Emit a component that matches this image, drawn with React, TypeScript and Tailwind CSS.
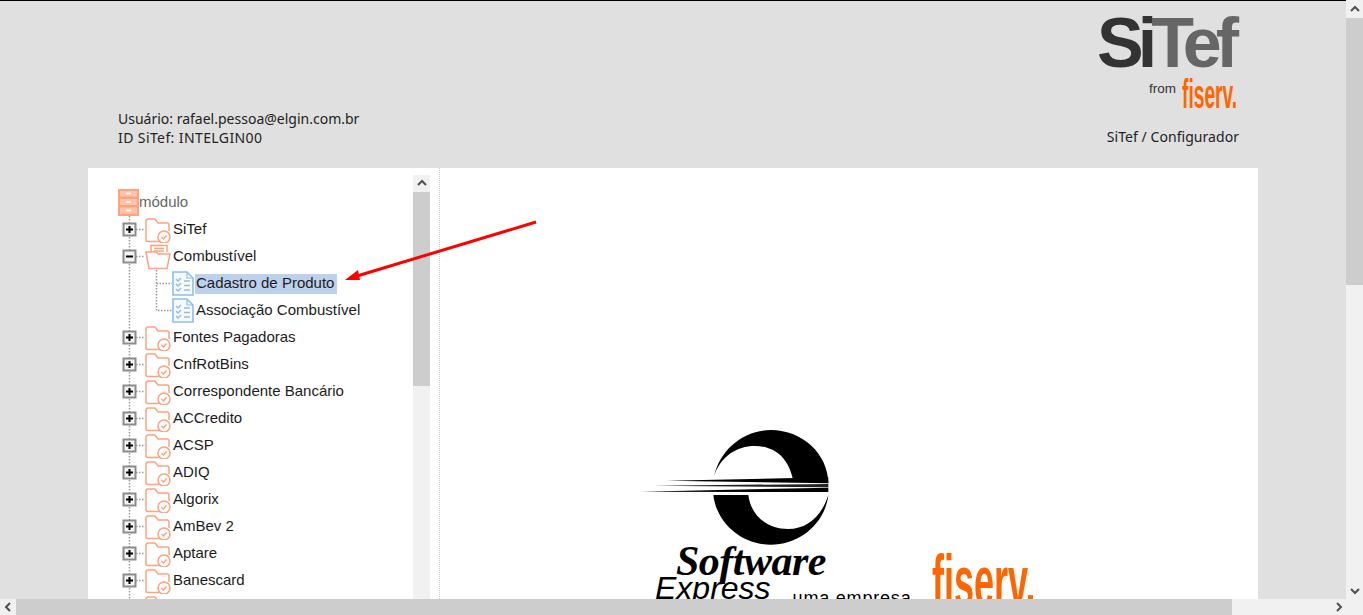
import React from 'react';

const folders = ['Fontes Pagadoras', 'CnfRotBins', 'Correspondente Bancário', 'ACCredito', 'ACSP', 'ADIQ', 'Algorix', 'AmBev 2', 'Aptare', 'Banescard', ''];

const Chevron = ({ dir }: { dir: 'up' | 'down' | 'left' | 'right' }) => {
  const d = {
    up: 'M2 7 L6 3 L10 7',
    down: 'M2 4 L6 8 L10 4',
    left: 'M8 2 L4 6 L8 10',
    right: 'M4 2 L8 6 L4 10',
  }[dir];
  return (
    <svg width="12" height="12" viewBox="0 0 12 12" fill="none">
      <path d={d} stroke="#505050" strokeWidth="2" />
    </svg>
  );
};

const Dots = ({ d }: { d: string }) => <path d={d} stroke="#999" strokeWidth="1.5" strokeDasharray="1.5 1.5" fill="none" />;

const Toggle = ({ open }: { open?: boolean }) => (
  <g>
    <Dots d="M11.5 0 V27 M18 13.5 H27" />
    <rect x="5.5" y="7.5" width="12" height="12" fill="#f4f4f4" stroke="#8c8c8c" strokeWidth="2" />
    <path d={open ? 'M8 13.5 H15' : 'M8 13.5 H15 M11.5 10 V17'} stroke="#000" strokeWidth="2" />
  </g>
);

const ClosedFolder = () => (
  <g fill="none" stroke="#ffa27e" strokeWidth="1.5">
    <path d="M28 24 V5.5 Q28 3 30 3 H37 L40 7 H49 Q51 7 51 9 V15 M44 25.5 H30 Q28 25.5 28 24" />
    <circle cx="46" cy="21" r="6" fill="#fff" />
    <path d="M43.5 21 L45.5 23 L48.5 19.5" />
  </g>
);

const OpenFolder = () => (
  <g fill="none" stroke="#ffa27e" strokeWidth="1.5">
    <path d="M33 9 V2.5 H49 V9 M36 5.5 H46 M36 8 H46" />
    <path d="M28 9 H38 L40 11 H52 L49 25.5 H31 Z" />
  </g>
);

const FileIcon = () => (
  <svg width="22" height="25" viewBox="0 0 22 25" fill="none" className="shrink-0">
    <path d="M1 1 H15 L21 7 V24 H1 Z" fill="#f4f9fd" stroke="#8fbfe6" strokeWidth="1.6" />
    <path d="M15 1 V7 H21" stroke="#8fbfe6" strokeWidth="1.2" />
    <path d="M4 8 L6 10 L9 7 M4 13 L6 15 L9 12 M4 18 L6 20 L9 17" stroke="#8fbbe0" strokeWidth="1.3" />
    <path d="M12 10 H18 M12 14.5 H18 M12 19 H18" stroke="#a9b8c6" strokeWidth="1.5" />
  </svg>
);

const FolderRow = ({ label, open }: { label: string; open?: boolean }) => (
  <div className="flex h-[27px] items-center">
    <svg width="55" height="27" viewBox="0 0 55 27" className="shrink-0">
      <Toggle open={open} />
      {open ? <OpenFolder /> : <ClosedFolder />}
    </svg>
    <span className="pb-[2px] text-[15px] leading-none text-[#1c1c1c]">{label}</span>
  </div>
);

const FileRow = ({ label, selected, last }: { label: string; selected?: boolean; last?: boolean }) => (
  <div className="flex h-[27px] items-center">
    <svg width="54" height="27" viewBox="0 0 54 27" className="shrink-0">
      <Dots d="M11.5 0 V27" />
      <Dots d={last ? 'M38.5 0 V13.5 H54' : 'M38.5 0 V27 M38.5 13.5 H54'} />
    </svg>
    <FileIcon />
    <span className={`ml-[1px] flex h-[20px] items-center pl-[1px] pr-[3px] text-[15px] text-[#1c1c1c] ${selected ? 'bg-[#bdd0ec]' : ''}`}>{label}</span>
  </div>
);

const ModuleIcon = () => (
  <svg width="21" height="27" viewBox="0 0 21 27" className="shrink-0">
    <rect width="21" height="27" fill="#ffa27e" />
    <path d="M2 2 H19 V7.5 H2 Z M2 10 H19 V16 H2 Z M2 18.5 H19 V25 H2 Z" fill="#ffc4ab" />
    <path d="M8 4.5 H13 M8 13 H13 M8 21.5 H13" stroke="#fff" strokeWidth="1.5" />
  </svg>
);

const EMark = () => (
  <svg width="440" height="128" viewBox="0 0 1320 384" className="block">
    <path d="M282 170 C300 85 375 30 452 30 C550 30 625 105 625 190 L518 175 C505 115 465 78 405 78 C350 78 300 110 282 170 Z" fill="#000" />
    <path d="M280 225 C290 310 365 374 452 374 C540 374 615 310 625 225 C605 290 560 327 505 327 C440 327 392 285 385 225 Z" fill="#000" />
    <path d="M140 182 L625 172 L625 190 Z" fill="#000" />
    <path d="M100 197 L625 192 L625 202 Z" fill="#222" />
    <path d="M60 215 L625 203 L625 216 Z" fill="#000" />
  </svg>
);

export default function App() {
  return (
    <div className="relative flex h-[615px] w-[1363px] flex-col overflow-hidden bg-[#e0e0e0] font-['Liberation_Sans',sans-serif]">
      <div className="flex min-h-0 flex-1">
        <div className="flex min-w-0 flex-1 flex-col overflow-hidden">
          <header className="flex h-[168px] shrink-0 justify-between border-t border-black pr-[107px] font-['Noto_Sans',sans-serif] text-[14px] text-[#222]">
            <div className="self-end pb-[21px] pl-[118px] leading-[19px]">
              <p>Usuário: rafael.pessoa@elgin.com.br</p>
              <p className="tracking-[.4px]">ID SiTef: INTELGIN00</p>
            </div>
            <div className="flex flex-col items-end">
              <div className="mt-[7px] font-['Liberation_Sans',sans-serif] text-[70px] font-bold leading-[70px] tracking-[-6px]">
                <span className="text-[#333]">Si</span>
                <span className="pr-[6px] text-[#666]">Tef</span>
              </div>
              <div className="flex h-[30px] items-start">
                <span className="mr-[6px] mt-[3px] font-['Liberation_Sans',sans-serif] text-[13.5px] leading-[16px] text-[#333]">from</span>
                <div className="w-[57px]">
                  <span className="inline-block origin-left scale-x-[.48] font-['Liberation_Sans',sans-serif] text-[40px] font-bold leading-[32px] text-[#ff6600]">fiserv.</span>
                </div>
              </div>
              <p className="mt-[19px] leading-[19px] tracking-[.05px]">SiTef / Configurador</p>
            </div>
          </header>
          <main className="mx-[88px] flex min-h-0 flex-1 bg-white">
            <section className="flex w-[342px] shrink-0 overflow-hidden pt-[7px]">
              <div className="min-w-0 flex-1 overflow-hidden pl-[30px] pt-[14px]">
                <div className="flex h-[27px] items-center">
                  <ModuleIcon />
                  <span className="text-[15px] text-[#666]">módulo</span>
                </div>
                <FolderRow label="SiTef" />
                <FolderRow label="Combustível" open />
                <FileRow label="Cadastro de Produto" selected />
                <FileRow label="Associação Combustível" last />
                {folders.map((name) => (
                  <FolderRow key={name} label={name} />
                ))}
              </div>
              <div className="flex w-[17px] shrink-0 flex-col bg-[#f1f1f1]">
                <div className="flex h-[17px] items-center justify-center"><Chevron dir="up" /></div>
                <div className="h-[194px] bg-[#cdcdcd]" />
              </div>
            </section>
            <section className="ml-[9px] min-w-0 flex-1 overflow-hidden border-l border-dotted border-[#ccc] pl-[180px] pt-[252px]">
              <EMark />
              <div className="ml-[56px] mt-[-1px] h-[28px] font-['Liberation_Serif',serif] text-[42px] font-bold italic leading-[28px] tracking-[-.5px] text-black">Software</div>
              <div className="flex h-[30px] items-start">
                <span className="ml-[35px] mt-[-2px] font-['Liberation_Sans',sans-serif] text-[32px] italic leading-[30px] text-black">Express</span>
                <span className="ml-[22px] mt-[13px] text-[18px] leading-[20px] tracking-[.8px] text-black">uma empresa</span>
                <div className="ml-[21px] mt-[-30px] w-[104px]">
                  <span className="inline-block origin-left scale-x-[.5] text-[72px] font-bold leading-[72px] text-[#ff6600]">fiserv.</span>
                </div>
              </div>
            </section>
          </main>
        </div>
        <div className="flex w-[17px] shrink-0 flex-col bg-[#f1f1f1] pt-[1px]">
          <div className="flex h-[17px] items-center justify-center"><Chevron dir="up" /></div>
          <div className="h-[267px] bg-[#cdcdcd]" />
          <div className="mt-auto flex h-[17px] items-center justify-center"><Chevron dir="down" /></div>
        </div>
      </div>
      <div className="flex h-[16px] shrink-0 bg-[#f1f1f1]">
        <div className="flex w-[16px] items-center justify-center"><Chevron dir="left" /></div>
        <div className="w-[1216px] bg-[#cdcdcd]" />
        <div className="ml-auto flex w-[31px] items-center justify-start pl-[1px]"><Chevron dir="right" /></div>
      </div>
      <svg width="1363" height="615" className="pointer-events-none absolute left-0 top-0">
        <path d="M536 222 L357 276" stroke="#ff0000" strokeWidth="3" fill="none" />
        <path d="M345 280 L358 270 L360 280 Z" fill="#ff0000" />
      </svg>
    </div>
  );
}
